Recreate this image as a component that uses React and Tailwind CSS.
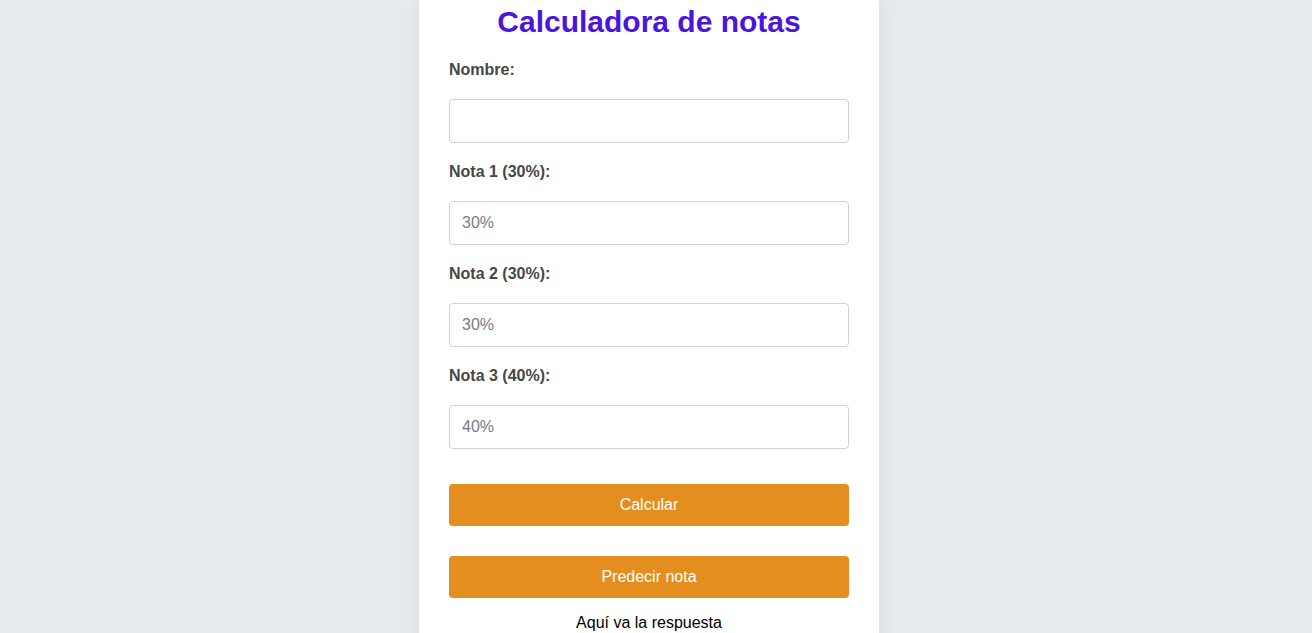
export default function App() {
  const fields = [
    { label: "Nombre:", ph: "" },
    { label: "Nota 1 (30%):", ph: "30%" },
    { label: "Nota 2 (30%):", ph: "30%" },
    { label: "Nota 3 (40%):", ph: "40%" },
  ];
  return (
    <div className="min-h-[633px] bg-[#e8ebee] flex justify-center pr-[14px]" style={{ fontFamily: '"Liberation Sans", Arial, sans-serif' }}>
      <div className="w-[460px] bg-white px-[30px] pb-[20px] shadow-[0_0_20px_rgba(0,0,0,0.08)]">
        <h1 className="text-center text-[30px] leading-[34px] font-bold text-[#4b14e0] mt-[5px]">Calculadora de notas</h1>
        {fields.map((f, i) => (
          <div key={i}>
            <label className={`block text-[16px] leading-[20px] font-bold text-[#474747] ${i === 0 ? "mt-[21px]" : "mt-[19px]"}`}>{f.label}</label>
            <input
              type="text"
              placeholder={f.ph}
              className="mt-[19px] block w-full h-[44px] border border-[#cfd2d8] rounded-[4px] px-[12px] text-[16px] text-[#333] placeholder:text-[#7b7b82] outline-none"
            />
          </div>
        ))}
        <button className="mt-[35px] block w-full h-[42px] rounded-[4px] bg-[#e48e1f] text-white text-[16px]">Calcular</button>
        <button className="mt-[30px] block w-full h-[42px] rounded-[4px] bg-[#e48e1f] text-white text-[16px]">Predecir nota</button>
        <p className="mt-[15px] text-center text-[16px] leading-[20px] text-black">Aquí va la respuesta</p>
      </div>
    </div>
  );
}
